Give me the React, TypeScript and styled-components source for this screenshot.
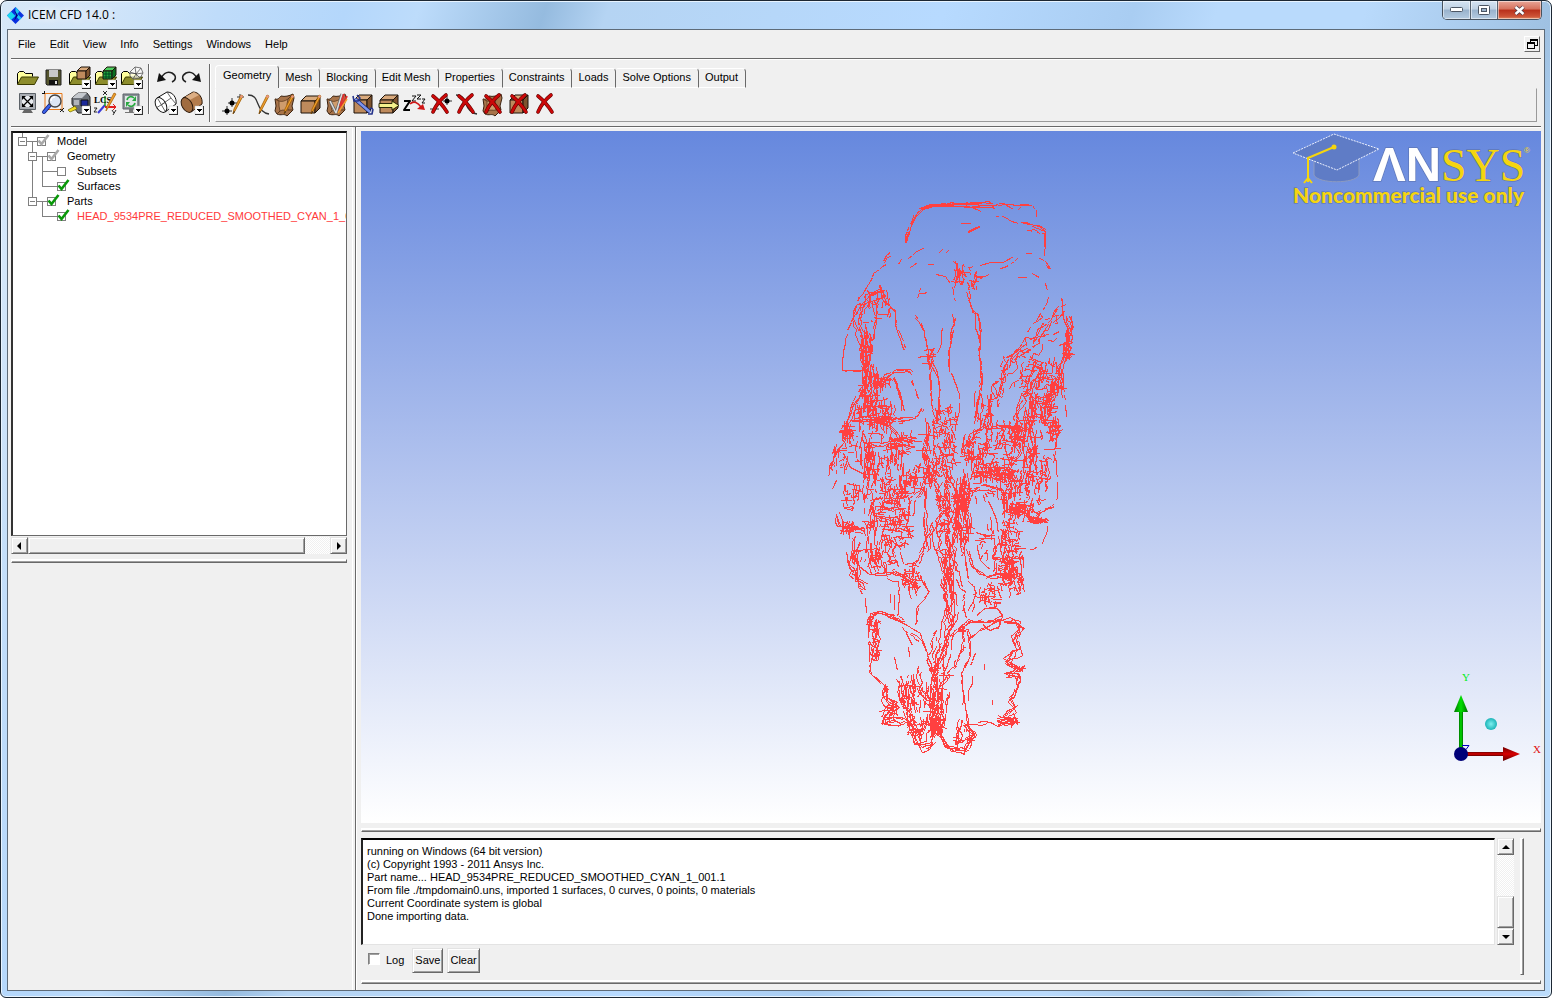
import React from "react";
import styled, { createGlobalStyle, css } from "styled-components";

const UI_FONT = `"Liberation Sans", Arial, sans-serif`;
const FACE = "#f0f0f0";

const GlobalStyle = createGlobalStyle`
  *, *::before, *::after { box-sizing: border-box; }
  body { margin: 0; background: #ffffff; font: 11px/13px ${UI_FONT}; color: #000; }
  button { font: inherit; color: inherit; }
  ul { list-style: none; margin: 0; padding: 0; }
`;

/* ---------- window frame ---------- */

const Frame = styled.div`
  display: flex;
  flex-direction: column;
  width: 100%;
  height: 100vh;
  min-height: 640px;
  padding: 0 6px 6px;
  border: 1px solid #1c2733;
  border-radius: 7px 7px 6px 6px;
  box-shadow: inset 0 0 0 1px #e8f4ff;
  background:
    linear-gradient(108deg, #d7e8f8 0, #d3e6f9 90px, #bfdcfa 210px, #b4d7fb 330px, #bddcfb 400px, #95bbdf 520px, #b5d4f3 580px, #b7daff 900px, #a9cdf2 1080px, #b9dafc 1160px, #b9dafc 1300px, #9fc1e2 1480px, #bbdcfc 1560px);
`;

const TitleBar = styled.header`
  display: flex;
  align-items: center;
  justify-content: space-between;
  height: 28px;
  flex: none;
`;

const AppTitle = styled.h1`
  display: flex;
  align-items: center;
  gap: 4px;
  margin: 0;
  font: 12px/18px "Open Sans", "Noto Sans", sans-serif;
  text-shadow: 0 0 8px #fff, 0 0 8px #fff;
`;

const WindowControls = styled.div`
  display: flex;
  align-self: flex-start;
  margin-right: 3px;
  height: 19px;
  border: 1px solid #47525e;
  border-top: 0;
  border-radius: 0 0 5px 5px;
  overflow: hidden;
`;

const ControlButton = styled.button<{ $close?: boolean }>`
  display: grid;
  place-items: center;
  width: ${(p) => (p.$close ? 44 : 27)}px;
  padding: 0;
  border: 0;
  box-shadow: inset 0 0 0 1px rgba(255, 255, 255, 0.5);
  background: ${(p) =>
    p.$close
      ? "linear-gradient(#e8a698, #d6705c 45%, #b8301a 50%, #cc5236 85%, #e08a60)"
      : "linear-gradient(#d5e4f3, #bfd1e3 45%, #98b2cc 50%, #b4cbe1)"};
  & + & { border-left: 1px solid #56626f; }
`;

const Client = styled.div`
  display: flex;
  flex-direction: column;
  flex: 1;
  min-height: 0;
  border: 1px solid #5e6b78;
  background: ${FACE};
  padding: 0 3px;
`;

/* ---------- menu and tool bars ---------- */

const MenuBar = styled.nav`
  display: flex;
  align-items: center;
  height: 29px;
  padding: 0 1px 0 0;
  border-bottom: 1px solid #696969;
  box-shadow: 0 1px 0 #fff;
  flex: none;
`;

const MenuButton = styled.button`
  border: 0;
  background: none;
  padding: 0 7px;
  line-height: 26px;
`;

const RestoreButton = styled.button`
  display: grid;
  place-items: center;
  width: 16px;
  height: 16px;
  margin-left: auto;
  padding: 0;
  background: ${FACE};
  border: 1px solid;
  border-color: #fff #696969 #696969 #fff;
`;

const ToolBar = styled.div`
  display: flex;
  align-items: flex-start;
  height: 68px;
  padding: 5px 4px 0 2px;
  border-bottom: 1px solid #696969;
  box-shadow: 0 1px 0 #fff;
  flex: none;
`;

const IconGrid = styled.div<{ $cols: number }>`
  display: grid;
  grid-template-columns: repeat(${(p) => p.$cols}, 26px);
  grid-auto-rows: 26px;
  margin: 0 4px 0 1px;
`;

const Divider = styled.span<{ $tall?: boolean }>`
  width: 2px;
  height: ${(p) => (p.$tall ? 58 : 50)}px;
  margin-right: ${(p) => (p.$tall ? 4 : 2)}px;
  border-left: 1px solid #696969;
  border-right: 1px solid #fff;
`;

const ToolButton = styled.button`
  display: block;
  width: 26px;
  height: 26px;
  padding: 0;
  border: 0;
  background: none;
  svg { display: block; }
`;

const TabArea = styled.div`
  flex: 1;
  min-width: 0;
  margin: 1px 0 0;
`;

const TabList = styled.div`
  display: flex;
  align-items: flex-end;
  height: 23px;
`;

const Tab = styled.button<{ $active?: boolean }>`
  height: 20px;
  padding: 0 7px 2px 6px;
  border: 0;
  border-top: 1px solid #fff;
  border-right: 1px solid #696969;
  border-bottom: 1px solid #fff;
  border-radius: 2px 4px 0 0;
  background: ${FACE};
  white-space: nowrap;
  ${(p) =>
    p.$active &&
    css`
      height: 23px;
      padding: 0 7px 4px;
      border-left: 1px solid #fff;
      border-bottom: 0;
      border-radius: 4px 4px 0 0;
    `}
`;

const TabPanel = styled.div`
  display: flex;
  height: 34px;
  padding: 2px 4px 0;
  border: 1px solid;
  border-color: ${FACE} #9a9a9a #9a9a9a #fff;
`;

/* ---------- work area ---------- */

const WorkArea = styled.main`
  display: flex;
  flex: 1;
  min-height: 0;
`;

const SidePane = styled.aside`
  width: 345px;
  flex: none;
  padding: 4px 8px 0 0;
  border-right: 1px solid #696969;
  box-shadow: inset -2px 0 0 ${FACE}, inset -3px 0 0 #fff;
`;

const TreeBox = styled.div`
  height: 405px;
  padding-top: 1px;
  overflow: hidden;
  background: #fff;
  border: 2px solid;
  border-color: #111 #696969 #696969 #333;
  border-width: 2px 1px 1px 2px;
`;

const Branch = styled.ul<{ $root?: boolean }>`
  padding-left: ${(p) => (p.$root ? 5 : 10)}px;
`;

const Node = styled.li`
  position: relative;
  &::before {
    content: "";
    position: absolute;
    left: 4px;
    top: -7px;
    height: 15px;
    border-left: 1px solid #808080;
  }
  &:not(:last-child)::before { height: 100%; }
`;

const NodeRow = styled.div`
  display: flex;
  align-items: center;
  height: 15px;
`;

const Expander = styled.button`
  position: relative;
  flex: none;
  width: 9px;
  height: 9px;
  padding: 0;
  border: 1px solid #808080;
  background: linear-gradient(#808080, #808080) center / 5px 1px no-repeat #fff;
`;

const Twig = styled.span<{ $leaf: boolean }>`
  flex: none;
  width: ${(p) => (p.$leaf ? 15 : 10)}px;
  margin-left: ${(p) => (p.$leaf ? 4 : 0)}px;
  height: 1px;
  background: #808080;
`;

const TreeLabel = styled.label<{ $red?: boolean }>`
  display: flex;
  align-items: center;
  gap: 11px;
  white-space: nowrap;
  color: ${(p) => (p.$red ? "#ff3a3a" : "#000")};
`;

const CheckWrap = styled.span`
  position: relative;
  display: block;
  flex: none;
  width: 9px;
  height: 9px;
  svg { position: absolute; left: 0; top: -3px; pointer-events: none; }
`;

const TreeCheck = styled.input`
  appearance: none;
  display: block;
  width: 9px;
  height: 9px;
  margin: 0;
  border: 1px solid #808080;
  background: #fff;
`;

const raised = css`
  background: ${FACE};
  border: 1px solid;
  border-color: #e3e3e3 #696969 #696969 #e3e3e3;
  box-shadow: inset 1px 1px 0 #fff, inset -1px -1px 0 #a0a0a0;
`;

const ScrollTrack = styled.div<{ $vertical?: boolean }>`
  display: flex;
  flex-direction: ${(p) => (p.$vertical ? "column" : "row")};
  ${(p) => (p.$vertical ? "width: 17px;" : "height: 17px; margin-top: 1px;")}
  background: repeating-conic-gradient(#fff 0 25%, ${FACE} 0 50%) 0 0 / 2px 2px;
`;

const ScrollButton = styled.button`
  display: grid;
  place-items: center;
  width: 17px;
  height: 17px;
  padding: 0;
  flex: none;
  ${raised}
`;

const Thumb = styled.div<{ $size: number }>`
  flex: 0 0 ${(p) => p.$size}px;
  ${raised}
`;

const Space = styled.div`
  flex: 1;
`;

const Sash = styled.div`
  height: 4px;
  flex: none;
  border: 1px solid;
  border-color: #fff #696969 #696969 #fff;
  box-shadow: inset 0 -1px 0 #a0a0a0;
  background: #fff;
`;

const SideSash = styled(Sash)`
  margin-top: 5px;
`;

const MainPane = styled.section`
  display: flex;
  flex-direction: column;
  flex: 1;
  min-width: 0;
  padding: 4px 0 6px 4px;
  border-left: 1px solid #fff;
`;

const Viewport = styled.div`
  position: relative;
  display: flex;
  justify-content: center;
  flex: 1;
  min-height: 0;
  margin-bottom: 5px;
  overflow: hidden;
  background: linear-gradient(#6688de, #ffffff);
`;

const MeshDrawing = styled.svg`
  display: block;
  flex: none;
  margin: 59px 0 0 8px;
`;

const Logo = styled.svg`
  position: absolute;
  top: 0;
  right: 8px;
`;

const Triad = styled.svg`
  position: absolute;
  right: 0;
  bottom: 53px;
`;

const Console = styled.div`
  display: flex;
  margin-top: 6px;
  padding-right: 17px;
  flex: none;
`;

const ConsoleMain = styled.div`
  flex: 1;
  min-width: 0;
`;

const ConsoleRow = styled.div`
  display: flex;
  gap: 2px;
`;

const Log = styled.textarea`
  display: block;
  flex: 1;
  min-width: 0;
  height: 107px;
  margin: 0;
  padding: 5px 4px;
  resize: none;
  overflow: hidden;
  outline: 0;
  border: 1px solid;
  border-color: #000 #e3e3e3 #e3e3e3 #222;
  border-width: 2px 1px 1px 2px;
  background: #fff;
  color: #000;
  font: 11px/13px ${UI_FONT};
`;

const ConsoleActions = styled.div`
  display: flex;
  align-items: flex-start;
  gap: 4px;
  padding: 3px 0 2px 7px;
`;

const LogOption = styled.label`
  display: flex;
  align-items: center;
  gap: 6px;
  height: 24px;
  padding-right: 4px;
`;

const LogCheck = styled.input`
  appearance: none;
  width: 12px;
  height: 12px;
  margin: 0 0 2px;
  border: 1px solid;
  border-color: #808080 #fff #fff #808080;
  box-shadow: inset 1px 1px 0 #a0a0a0;
  background: #fff;
`;

const PushButton = styled.button`
  height: 25px;
  padding: 0 2px;
  min-width: 31px;
  ${raised}
`;

const EndSash = styled.div`
  width: 4px;
  margin: 0 0 0 6px;
  border: 1px solid;
  border-color: #fff #696969 #696969 #fff;
  box-shadow: inset -1px 0 0 #a0a0a0;
  background: #fff;
`;

const BottomSash = styled(Sash)`
  margin-top: 5px;
`;

/* ---------- icons ---------- */

const Icon = ({ children }: { children: React.ReactNode }) => (
  <svg width="26" height="26" viewBox="0 0 26 26" fill="none" strokeLinejoin="round" aria-hidden="true">
    {children}
  </svg>
);

const DropBadge = () => (
  <g shapeRendering="crispEdges">
    <path d="M16 16h8v8h-8z" fill="#fff" stroke="#b8b8b8" strokeWidth=".5" />
    <path d="M24.500 16v8.500h-8.500" stroke="#333" />
    <path d="M17.500 19h6l-3 3z" fill="#000" />
  </g>
);

const Folder = () => (
  <>
    <path d="M3.500 20V9.500l2-2h4l2 2h7v3" fill="#ffff9c" stroke="#000" />
    <path d="M3.500 20.500l4-7.500h17l-4 7.500z" fill="#8d8d2c" stroke="#3c3c00" />
  </>
);

const Cube = ({ x = 3, y = 5, w = 19, h = 17, mesh }: { x?: number; y?: number; w?: number; h?: number; mesh?: boolean }) => {
  const d = Math.round(w * 0.28);
  const top = mesh ? "#4fd060" : "#d9aa7d";
  const front = mesh ? "#22a83c" : "#be8a5c";
  const side = mesh ? "#0b6e22" : "#7e532e";
  return (
    <>
      <g stroke="#1c120a">
        <path d={`M${x} ${y + d}l${d} ${-d}h${w - d}l${-d} ${d}z`} fill={top} />
        <path d={`M${x} ${y + d}h${w - d}v${h - d}h${d - w}z`} fill={front} />
        <path d={`M${x + w - d} ${y + d}l${d} ${-d}v${h - d}l${-d} ${d}z`} fill={side} />
      </g>
      {mesh && <path d={`M${x + 3} ${y + d}v${h - d}M${x + 6} ${y + d}v${h - d}M${x} ${y + d + 3}h${w - d}M${x} ${y + d + 6}h${w - d}`} stroke="#042" />}
    </>
  );
};

const Surface = () => (
  <>
    <path d="M3 8c3 1 4-1 6-3 4 1 8 0 12-2l1 4-2 8 1 4-6 6c-3-3-6 0-10-2l-2-3 1-5z" fill="#a8744a" stroke="#3a2210" />
    <path d="M7 10c3 1 6 0 9-2l-1 5 1 6c-3 1-5-1-8 1l-1-5z" fill="#cf9c6c" stroke="#5e3b1f" strokeWidth=".8" />
    <path d="M3 8l4 2M16 8l5-5M16 19l5 0M8 20l-3 3" stroke="#5e3b1f" />
  </>
);

const Pencil = ({ x = 0 }: { x?: number }) => (
  <g transform={`translate(${x} 0)`}>
    <path d="M20 4l2 1-8 15-2 3 1-5z" fill="#f0a030" stroke="#a05c00" strokeWidth=".8" />
    <path d="M20 4l2 1-1 2-2-1z" fill="#e8988c" />
    <path d="M13 20l-1 3 2-2z" fill="#222" />
  </g>
);

const RedCross = ({ x = 0 }: { x?: number }) => (
  <g transform={`translate(${x} 0)`}>
    <path d="M5 5c5 4 9 8 14 16M18 4C13 8 8 14 5 21" stroke="#600" strokeWidth="3.600" strokeLinecap="round" />
    <path d="M5 5c5 4 9 8 14 16M18 4C13 8 8 14 5 21" stroke="#cc0808" strokeWidth="2.400" strokeLinecap="round" />
  </g>
);

const Points = () => (
  <>
    <path d="M2 20h10M7 15v9M8 12h9M12 7v9M17 6h7M20 3v6" stroke="#333" />
    <circle cx="7" cy="20" r="2.500" fill="#000" />
    <circle cx="12" cy="12" r="2.500" fill="#000" />
  </>
);

const Curve = () => <path d="M2 4c6 0 8 3 10 9s5 9 11 10" stroke="#333" strokeWidth="1.300" />;

const Monitor = () => (
  <>
    <path d="M5 4h16v15H5z" fill="#8b9197" stroke="#5c636a" />
    <path d="M7 6h12v11H7z" fill="#e2e6e8" />
    <path d="M11 19h4v3h4v1H7v-1h4z" fill="#777" />
  </>
);

const Undo = ({ flip }: { flip?: boolean }) => (
  <g transform={flip ? "translate(26 0) scale(-1 1)" : undefined}>
    <path d="M8 14c3-5 7-7 11-5 5 3 4 7 0 9" stroke="#222" strokeWidth="1.500" />
    <path d="M4 18l2-9 7 7z" fill="#111" />
  </g>
);

type Tool = { name: string; art: React.ReactNode };

const fileTools: Tool[] = [
  { name: "Open project", art: <Folder /> },
  {
    name: "Save project",
    art: (
      <>
        <path d="M6 6h15v15H7l-1-1z" fill="#56562e" stroke="#222" />
        <path d="M9 6h9v7H9z" fill="#c8c8c8" />
        <path d="M9 16h9v5H9z" fill="#111" />
        <path d="M15 17h2v3h-2z" fill="#ddd" />
      </>
    ),
  },
  { name: "Open geometry", art: (<><Folder /><Cube x={11} y={3} w={13} h={12} /><DropBadge /></>) },
  { name: "Open mesh", art: (<><Folder /><Cube x={11} y={3} w={13} h={12} mesh /><DropBadge /></>) },
  {
    name: "Open blocking",
    art: (
      <>
        <Folder />
        <path d="M12 8l5-5 6 1 2 5-3 5-7 1-3-3zM12 8l6 2 7-1M17 3l1 7 4 4M23 4l-5 6-3 5" fill="#fff" fillOpacity=".6" stroke="#555" strokeWidth=".8" />
        <DropBadge />
      </>
    ),
  },
  {
    name: "Fit window",
    art: (
      <>
        <path d="M5.500 3.500h16v16h-16z" fill="#a9adb3" stroke="#5c6268" />
        <path d="M8 6h11v11H8z" fill="#e8ebef" />
        <path d="M9 7l9 9M18 7l-9 9" stroke="#000" strokeWidth="1.200" />
        <path d="M8 6h4l-4 4zM19 6v4l-4-4zM8 17v-4l4 4zM19 17h-4l4-4z" fill="#000" />
        <path d="M10 20h7l2 3H8z" fill="#666" />
      </>
    ),
  },
  {
    name: "Box zoom",
    art: (
      <>
        <path d="M5 3.500h17v16H5z" stroke="#e87818" />
        <path d="M10 15l-6 7" stroke="#101c78" strokeWidth="4" strokeLinecap="round" />
        <path d="M10 15l-6 7" stroke="#3c62e8" strokeWidth="2.400" strokeLinecap="round" />
        <circle cx="15" cy="11" r="6" fill="#dce6f4" stroke="#444" strokeWidth="1.400" />
        <path d="M11 11c0-3 2-4 4-4" stroke="#fff" strokeWidth="1.500" />
        <path d="M2 3.500h2M4.500 1v3M20 19l4 3M24 18l-4 4" stroke="#111" />
      </>
    ),
  },
  {
    name: "Measure distance",
    art: (
      <>
        <path d="M6 14V8l6-5h9l3 4v13l-4 3h-8l-3-4z" fill="#6c7178" stroke="#222" />
        <path d="M6 8l6-5h9l-5 5z" fill="#c4c8cd" />
        <path d="M8 10h5v5H8z" fill="#b0b4ba" />
        <path d="M15 10h7v6h-7z" fill="#1c2a9a" stroke="#111" />
        <path d="M2 20l7-4 2 3-7 3z" fill="#f4e020" stroke="#665c00" strokeWidth=".7" />
        <DropBadge />
      </>
    ),
  },
  {
    name: "Local coordinate system",
    art: (
      <>
        <path d="M13 15l-7 8" stroke="#3a3ad8" strokeWidth="2" />
        <path d="M13 17h10" stroke="#e02020" strokeWidth="2" />
        <path d="M13 16V6" stroke="#20a020" strokeWidth="1.500" />
        <path d="M21 14l3 3-3 3" stroke="#e02020" />
        <text x="2" y="13" fontFamily="Liberation Serif, serif" fontWeight="700" fontSize="9" fill="#000">LCS</text>
        <path d="M11 1l4 4M15 1l-4 4M20 20l2 3M24 20l-3 5M2 18h3l-3 4h3" stroke="#111" strokeWidth=".9" />
        <path d="M22 3l2 1-8 14-2 3 1-5z" fill="#f0a030" stroke="#a05c00" strokeWidth=".7" />
      </>
    ),
  },
  {
    name: "Refresh",
    art: (
      <>
        <Monitor />
        <path d="M9 10c1-4 5-4 7-2M17 13c-1 4-5 4-7 2" stroke="#28a840" strokeWidth="1.600" />
        <path d="M18 6v5h-4zM8 17v-5h4z" fill="#28a840" />
        <DropBadge />
      </>
    ),
  },
];

const viewTools: Tool[] = [
  { name: "Undo", art: <Undo /> },
  { name: "Redo", art: <Undo flip /> },
  {
    name: "Wire frame display",
    art: (
      <>
        <path d="M4 8l10-6c6 0 10 6 9 12l-11 8z" fill="#fff" stroke="#111" />
        <ellipse cx="8" cy="15" rx="5" ry="8" transform="rotate(-30 8 15)" fill="#fff" stroke="#111" />
        <path d="M8 15l10-7M5 9l7 12M3 18l10-6M14 2l4 6 5 6" stroke="#555" strokeWidth=".9" />
        <DropBadge />
      </>
    ),
  },
  {
    name: "Solid display",
    art: (
      <>
        <path d="M4 8l10-6c6 0 10 6 9 12l-11 8z" fill="#b47c4c" stroke="#2c1a0c" />
        <path d="M6 7l9-5 5 3-11 6z" fill="#dcae84" />
        <ellipse cx="8" cy="15" rx="5" ry="8" transform="rotate(-30 8 15)" fill="#a06c40" stroke="#2c1a0c" />
        <DropBadge />
      </>
    ),
  },
];

const geometryTools: Tool[] = [
  { name: "Create point", art: (<><Points /><Pencil x={1} /></>) },
  { name: "Create curve", art: (<><Curve /><Pencil x={1} /></>) },
  { name: "Create surface", art: (<><Surface /><Pencil /></>) },
  { name: "Create body", art: (<><Cube /><Pencil x={1} /></>) },
  {
    name: "Create faceted geometry",
    art: (
      <>
        <Surface />
        <path d="M6 10l6 12M18 3l-6 19" stroke="#666" strokeWidth="3" />
        <path d="M6 10l6 12M18 3l-6 19" stroke="#ddd" strokeWidth="1.500" />
        <path d="M20 3l-4 12M23 5l-8 15" stroke="#e03030" strokeWidth="2" />
        <path d="M23 8l-9 14" stroke="#f0a030" strokeWidth="1.500" />
      </>
    ),
  },
  {
    name: "Repair geometry",
    art: (
      <>
        <Cube x={4} y={4} w={18} h={18} />
        <path d="M5 8l15 13" stroke="#1a2468" strokeWidth="4" />
        <path d="M5 8l15 13" stroke="#7c94ec" strokeWidth="2.400" />
        <path d="M3 5l1 5h4l2-3-3-3M23 18l-1 5h-4M20 17l3 1" stroke="#26348c" strokeWidth="1.600" />
      </>
    ),
  },
  {
    name: "Transform geometry",
    art: (
      <>
        <Cube x={4} y={4} w={18} h={18} />
        <path d="M3 12.500h13v-2.500l7 4.500-7 4.500v-2.500H3z" fill="#f5f08c" stroke="#2c2a08" />
      </>
    ),
  },
  {
    name: "Restore dormant entities",
    art: (
      <>
        <path d="M2 10h6l-6 9h6" stroke="#000" strokeWidth="2" />
        <path d="M10 5h4l-4 5h4M15 4h4l-4 4h4M20 8h3l-3 4h3" stroke="#111" />
        <path d="M8 13c4-4 8-1 11 3" stroke="#d01818" strokeWidth="1.600" />
        <path d="M23 19l-8-1 6-5z" fill="#d01818" />
      </>
    ),
  },
  { name: "Delete point", art: (<><path d="M2 18h9M15 10h9M19 5v9" stroke="#333" /><circle cx="19" cy="10" r="2.500" fill="#000" /><RedCross /></>) },
  { name: "Delete curve", art: (<><Curve /><RedCross /></>) },
  { name: "Delete surface", art: (<><Surface /><RedCross x={1} /></>) },
  { name: "Delete body", art: (<><Cube x={4} y={4} w={18} h={18} /><RedCross x={1} /></>) },
  { name: "Delete any entity", art: <RedCross x={1} /> },
];

const Tools = ({ items }: { items: Tool[] }) => (
  <>
    {items.map((t) => (
      <ToolButton key={t.name} type="button" aria-label={t.name}>
        <Icon>{t.art}</Icon>
      </ToolButton>
    ))}
  </>
);

const Arrow = ({ dir }: { dir: "up" | "down" | "left" | "right" }) => {
  const d = { up: "M0 6h8L4 2z", down: "M0 2h8L4 6z", left: "M5 0v8L1 4z", right: "M2 0v8l4-4z" }[dir];
  return (
    <svg width="8" height="8" aria-hidden="true">
      <path d={d} />
    </svg>
  );
};

/* ---------- model tree ---------- */

type TreeNode = { label: string; state: "on" | "off" | "mixed"; red?: boolean; children?: TreeNode[] };

const model: TreeNode = {
  label: "Model",
  state: "mixed",
  children: [
    {
      label: "Geometry",
      state: "mixed",
      children: [
        { label: "Subsets", state: "off" },
        { label: "Surfaces", state: "on" },
      ],
    },
    {
      label: "Parts",
      state: "on",
      children: [{ label: "HEAD_9534PRE_REDUCED_SMOOTHED_CYAN_1_001.1", state: "on", red: true }],
    },
  ],
};

const TreeItem = ({ node }: { node: TreeNode }) => (
  <Node>
    <NodeRow>
      {node.children && <Expander type="button" aria-label={`Collapse ${node.label}`} />}
      <Twig $leaf={!node.children} />
      <TreeLabel $red={node.red}>
        <CheckWrap>
          <TreeCheck type="checkbox" defaultChecked={node.state !== "off"} />
          {node.state !== "off" && (
            <svg width="13" height="12" viewBox="0 0 13 12" fill="none" aria-hidden="true">
              <path d="M1.500 6.500L4.500 10L11.500 1" stroke={node.state === "on" ? "#089808" : "#a8a8a8"} strokeWidth="2.600" />
            </svg>
          )}
        </CheckWrap>
        {node.label}
      </TreeLabel>
    </NodeRow>
    {node.children && (
      <Branch>
        {node.children.map((c) => (
          <TreeItem key={c.label} node={c} />
        ))}
      </Branch>
    )}
  </Node>
);

/* ---------- surface mesh ----------
   Feature lines and dense patches, on a grid of three units per pixel. */

type Strand = [copies: number, spread: number, gap: number, ...pts: number[]];

const strands: Strand[] = [
  [3, 10, 0.12, 256, 155, 264, 120, 285, 75, 300, 55, 330, 45, 400, 41, 440, 42],
  [2, 6, 0.08, 300, 50, 400, 40, 515, 36],
  [3, 8, 0.08, 310, 48, 400, 44, 525, 49],
  [2, 8, 0.2, 525, 40, 570, 42, 640, 46, 648, 75],
  [1, 3, 0.1, 525, 76, 555, 78, 575, 92, 605, 98],
  [1, 3, 0.1, 560, 45, 590, 60, 600, 50],
  [3, 12, 0.2, 600, 98, 640, 105, 673, 118, 674, 145],
  [2, 10, 0.2, 615, 115, 670, 125, 668, 190],
  [1, 0, 0, 420, 98, 450, 100],
  [2, 3, 0, 445, 124, 480, 108],
  [1, 0, 0, 455, 50, 482, 62],
  [1, 2, 0, 265, 203, 285, 185, 312, 170],
  [1, 0, 0, 270, 232, 290, 215],
  [1, 0, 0, 355, 190, 365, 178],
  [1, 0, 0, 375, 190, 383, 180],
  [1, 0, 0, 320, 223, 340, 221],
  [1, 0, 0, 235, 222, 242, 207],
  [3, 8, 0, 188, 216, 195, 200, 208, 190],
  [1, 4, 0.2, 195, 225, 160, 250, 140, 290, 110, 330, 100, 370, 80, 420, 70, 480, 66, 540],
  [2, 6, 0.1, 70, 540, 130, 541],
  [5, 26, 0.25, 185, 305, 140, 325, 112, 370, 108, 420, 130, 470, 135, 560],
  [2, 8, 0.2, 180, 285, 190, 325, 225, 365, 230, 410, 252, 475],
  [2, 16, 0.2, 160, 320, 170, 370, 155, 420, 150, 480],
  [1, 4, 0.05, 350, 253, 375, 260, 395, 290, 403, 335],
  [2, 10, 0.25, 400, 210, 410, 250, 395, 300],
  [1, 0, 0, 480, 225, 510, 217, 550, 216, 578, 198],
  [1, 0, 0.1, 540, 235, 565, 226, 592, 205],
  [3, 14, 0.15, 440, 300, 450, 345, 468, 370, 475, 420, 470, 500, 482, 560, 465, 640, 470, 690],
  [1, 5, 0.15, 466, 240, 470, 300],
  [1, 3, 0, 300, 295, 298, 308, 290, 325],
  [1, 0, 0, 298, 308, 320, 307],
  [2, 10, 0.15, 290, 380, 305, 400, 315, 460, 325, 520, 335, 600, 345, 700],
  [2, 8, 0.2, 325, 500, 345, 540, 360, 600, 350, 700],
  [3, 12, 0.25, 400, 370, 390, 430, 380, 500, 382, 540],
  [1, 3, 0.05, 388, 540, 400, 560, 417, 610, 415, 660, 405, 720],
  [1, 0, 0.1, 365, 415, 362, 460, 352, 490],
  [1, 0, 0, 590, 262, 618, 262],
  [1, 2, 0, 635, 250, 655, 262],
  [1, 0, 0, 615, 190, 632, 190],
  [2, 6, 0.2, 660, 205, 675, 212, 688, 235],
  [1, 3, 0.1, 675, 280, 686, 310, 683, 335, 660, 370, 645, 400],
  [2, 6, 0.1, 725, 325, 728, 380, 743, 420, 745, 500],
  [5, 20, 0.2, 748, 380, 750, 430, 735, 500, 705, 580, 685, 660],
  [1, 4, 0.35, 728, 480, 730, 580, 740, 680],
  [6, 42, 0.32, 718, 360, 660, 420, 600, 480, 550, 520, 530, 570, 512, 650],
  [2, 10, 0.1, 512, 610, 512, 720],
  [3, 34, 0.35, 700, 420, 650, 470, 600, 520, 560, 580],
  [3, 14, 0.12, 185, 580, 200, 555, 220, 541, 262, 540, 272, 552],
  [3, 12, 0.12, 220, 560, 235, 610, 245, 660],
  [2, 12, 0.3, 275, 570, 290, 620],
  [3, 16, 0.15, 130, 590, 100, 640, 85, 700, 80, 740, 50, 780, 30, 830],
  [3, 16, 0.15, 100, 685, 200, 688, 290, 683, 310, 655],
  [1, 0, 0.2, 70, 790, 90, 830, 125, 850, 155, 852],
  [3, 14, 0.1, 180, 700, 220, 720, 245, 765],
  [3, 14, 0.1, 140, 760, 190, 765, 240, 755, 280, 765],
  [3, 14, 0.1, 520, 710, 580, 712, 605, 750],
  [3, 14, 0.1, 440, 770, 460, 730, 500, 710, 490, 800],
  [4, 26, 0.2, 580, 710, 600, 650, 630, 590, 660, 530, 620, 510],
  [2, 8, 0.2, 550, 770, 570, 830, 600, 790, 580, 750],
  [1, 0, 0.2, 620, 778, 720, 775],
  [1, 4, 0.3, 705, 780, 710, 860, 708, 930],
  [1, 4, 0.5, 50, 800, 48, 870, 38, 895],
  [1, 4, 0.3, 40, 780, 28, 830, 25, 860],
  [4, 16, 0.1, 48, 975, 60, 1000, 90, 1015, 130, 1020],
  [2, 6, 0.3, 75, 880, 75, 930],
  [1, 4, 0.2, 80, 880, 115, 885, 110, 930, 90, 960],
  [2, 8, 0.1, 120, 1060, 105, 1100, 120, 1130, 150, 1155, 220, 1148],
  [5, 34, 0.2, 92, 1090, 100, 1150, 140, 1200],
  [1, 4, 0.2, 135, 1210, 140, 1265],
  [4, 16, 0.1, 220, 1145, 260, 1160, 290, 1190],
  [1, 3, 0.25, 235, 1170, 238, 1230, 232, 1280],
  [2, 10, 0.3, 300, 1150, 325, 1200, 290, 1250, 285, 1300],
  [3, 18, 0.12, 270, 1000, 275, 930, 320, 890, 318, 1080],
  [3, 20, 0.25, 345, 1000, 320, 1070, 290, 1130],
  [4, 22, 0.06, 142, 1305, 150, 1280, 170, 1275, 215, 1285, 245, 1300],
  [1, 3, 0.05, 215, 1285, 260, 1305, 300, 1330, 320, 1385],
  [2, 14, 0.2, 250, 1310, 300, 1360, 320, 1410, 345, 1480, 345, 1530],
  [5, 24, 0.05, 160, 1290, 155, 1340, 162, 1410],
  [2, 12, 0.08, 155, 1380, 150, 1445, 175, 1470, 200, 1490],
  [6, 24, 0.04, 205, 1490, 190, 1525, 225, 1545, 205, 1565, 194, 1588, 250, 1598],
  [5, 26, 0.12, 240, 1470, 255, 1540, 275, 1600, 292, 1675, 318, 1665, 350, 1610],
  [4, 24, 0.2, 290, 1440, 300, 1500, 330, 1560, 345, 1620],
  [4, 20, 0.08, 420, 1315, 450, 1285, 500, 1286, 545, 1280],
  [2, 7, 0.05, 470, 1275, 495, 1250, 530, 1250, 548, 1275, 535, 1310, 510, 1318, 490, 1300],
  [2, 12, 0.1, 450, 1340, 490, 1310, 550, 1285],
  [5, 22, 0.04, 550, 1288, 592, 1287, 603, 1312, 585, 1340],
  [5, 22, 0.04, 585, 1340, 596, 1385, 558, 1410, 603, 1433],
  [4, 20, 0.05, 605, 1433, 555, 1456, 586, 1460, 594, 1490, 564, 1530, 580, 1555, 552, 1580],
  [5, 18, 0.05, 540, 1585, 578, 1593, 540, 1598],
  [2, 14, 0.1, 550, 1600, 480, 1597, 440, 1605],
  [2, 8, 0.1, 390, 1340, 410, 1320, 445, 1322, 445, 1400, 420, 1450, 430, 1540, 445, 1605],
  [3, 18, 0.2, 430, 1320, 430, 1370, 400, 1430, 360, 1490, 350, 1600],
  [1, 3, 0.1, 400, 1320, 390, 1400, 370, 1450],
  [4, 18, 0.06, 350, 1620, 385, 1675, 440, 1682, 465, 1630, 430, 1600],
  [3, 14, 0.1, 420, 1590, 410, 1660, 450, 1640],
  [6, 30, 0.16, 385, 840, 395, 1000, 385, 1130, 385, 1250, 370, 1350, 345, 1450, 345, 1630],
  [2, 7, 0.08, 386, 1080, 390, 1250],
  [4, 34, 0.3, 350, 840, 365, 960, 350, 1060, 375, 1120, 380, 1200],
  [3, 22, 0.3, 345, 1320, 330, 1400, 340, 1480],
  [3, 14, 0.15, 400, 1200, 408, 1270, 380, 1350, 350, 1440],
  [4, 34, 0.2, 410, 1070, 425, 1150, 450, 1210, 440, 1270],
  [3, 14, 0.1, 445, 1080, 460, 1130, 500, 1160, 560, 1155],
  [1, 3, 0.15, 470, 1060, 480, 1110, 520, 1145, 527, 1060],
  [2, 8, 0.15, 450, 900, 490, 880, 545, 895, 550, 1000],
  [1, 3, 0.2, 490, 900, 530, 990, 545, 1100],
  [4, 16, 0.08, 570, 960, 610, 970, 630, 985, 680, 995],
  [3, 16, 0.15, 600, 955, 650, 975, 695, 950],
  [1, 3, 0.08, 683, 990, 678, 1030, 665, 1060, 640, 1075, 590, 1077],
  [3, 14, 0.2, 605, 1090, 600, 1150, 605, 1180, 590, 1210],
  [1, 0, 0, 200, 1165, 220, 1172, 235, 1172],
  [1, 0, 0, 210, 1210, 210, 1235],
  [1, 0, 0, 221, 1213, 221, 1258],
  [1, 0, 0.1, 218, 1388, 230, 1440],
  [1, 0, 0, 263, 1368, 268, 1398],
  [1, 0, 0, 258, 1330, 275, 1365],
  [1, 0, 0, 517, 1526, 517, 1543],
  [1, 0, 0, 493, 1420, 493, 1438],
  [1, 0, 0, 465, 1390, 450, 1425],
  [1, 0, 0, 457, 1455, 455, 1480, 443, 1500, 443, 1530],
];

type Patch = [cx: number, cy: number, rx: number, ry: number, n: number, kind: "v" | "h" | "m"];

const patches: Patch[] = [
  [440, 258, 44, 36, 34, "m"],
  [160, 350, 55, 50, 30, "m"],
  [138, 480, 16, 60, 45, "v"],
  [148, 590, 30, 70, 80, "v"],
  [185, 575, 20, 20, 22, "m"],
  [160, 665, 62, 40, 90, "m"],
  [78, 725, 16, 28, 36, "m"],
  [160, 770, 60, 90, 60, "v"],
  [250, 760, 36, 30, 32, "h"],
  [215, 850, 45, 90, 55, "v"],
  [60, 800, 32, 40, 18, "m"],
  [180, 690, 80, 14, 26, "h"],
  [325, 500, 16, 24, 12, "m"],
  [370, 690, 38, 40, 38, "m"],
  [370, 790, 36, 80, 70, "m"],
  [325, 780, 20, 90, 36, "v"],
  [742, 460, 14, 40, 32, "m"],
  [645, 580, 44, 60, 55, "m"],
  [700, 570, 30, 70, 40, "v"],
  [685, 635, 18, 36, 34, "m"],
  [703, 725, 14, 36, 40, "m"],
  [630, 750, 24, 130, 70, "v"],
  [655, 690, 40, 55, 34, "v"],
  [595, 740, 20, 35, 36, "m"],
  [550, 730, 60, 34, 40, "m"],
  [460, 780, 36, 50, 56, "m"],
  [530, 800, 60, 60, 56, "m"],
  [530, 850, 80, 22, 70, "m"],
  [490, 680, 26, 50, 20, "v"],
  [300, 860, 45, 36, 50, "m"],
  [655, 830, 50, 55, 34, "m"],
  [148, 900, 20, 130, 60, "v"],
  [215, 950, 55, 55, 66, "h"],
  [235, 885, 50, 50, 35, "m"],
  [225, 1030, 45, 50, 56, "m"],
  [160, 1040, 35, 90, 38, "v"],
  [190, 1115, 55, 36, 40, "m"],
  [85, 1010, 20, 16, 28, "m"],
  [95, 930, 30, 55, 16, "m"],
  [108, 1100, 18, 50, 16, "v"],
  [270, 1165, 26, 45, 44, "m"],
  [372, 960, 18, 60, 36, "m"],
  [428, 960, 24, 110, 95, "v"],
  [430, 920, 22, 45, 40, "m"],
  [490, 900, 55, 36, 20, "m"],
  [510, 850, 45, 22, 30, "m"],
  [500, 1060, 40, 70, 24, "m"],
  [575, 900, 28, 70, 76, "m"],
  [600, 960, 40, 24, 60, "m"],
  [655, 990, 22, 8, 26, "h"],
  [650, 890, 35, 55, 42, "m"],
  [570, 1060, 28, 80, 80, "m"],
  [555, 1135, 30, 34, 60, "m"],
  [575, 1170, 34, 34, 50, "m"],
  [510, 1215, 36, 36, 34, "m"],
  [380, 1120, 12, 130, 26, "v"],
  [295, 1540, 50, 70, 40, "v"],
  [268, 1500, 14, 60, 24, "v"],
  [300, 1610, 40, 26, 36, "m"],
  [210, 1570, 24, 30, 18, "m"],
  [350, 1605, 20, 30, 44, "m"],
  [375, 1500, 22, 80, 24, "v"],
  [430, 1640, 30, 30, 14, "m"],
  [578, 1592, 10, 8, 10, "m"],
  [162, 1310, 22, 20, 16, "m"],
  [168, 1380, 14, 40, 14, "h"],
];

const buildMesh = () => {
  let seed = 9534;
  const rnd = () => {
    seed = (seed * 1664525 + 1013904223) % 4294967296;
    return seed / 4294967296;
  };
  const px = (v: number) => Math.round(v / 3) + 0.5;
  const out: string[] = [];

  strands.forEach(([copies, spread, gap, ...pts]) => {
    for (let c = 0; c < copies; c++) {
      let ox = (rnd() - 0.5) * spread;
      let oy = (rnd() - 0.5) * spread;
      let pen = false;
      for (let i = 0; i + 3 < pts.length; i += 2) {
        const [x0, y0, x1, y1] = pts.slice(i, i + 4);
        const steps = Math.max(1, Math.round(Math.hypot(x1 - x0, y1 - y0) / 12));
        for (let s = i === 0 ? 0 : 1; s <= steps; s++) {
          const t = s / steps;
          const lim = spread / 2;
          ox = Math.max(-lim, Math.min(lim, ox + (rnd() - 0.5) * spread * 0.7));
          oy = Math.max(-lim, Math.min(lim, oy + (rnd() - 0.5) * spread * 0.7));
          if (rnd() < gap) pen = false;
          out.push(`${pen ? "L" : "M"}${px(x0 + (x1 - x0) * t + ox)} ${px(y0 + (y1 - y0) * t + oy)}`);
          pen = true;
        }
      }
    }
  });

  patches.forEach(([cx, cy, rx, ry, n, kind]) => {
    for (let i = 0; i < n; i++) {
      const a = rnd() * Math.PI * 2;
      const r = Math.sqrt(rnd());
      const flat = kind === "h" ? rnd() < 0.75 : kind === "v" ? rnd() < 0.1 : rnd() < 0.35;
      const parts = 1 + Math.floor(rnd() * 3);
      const reach = kind === "v" ? 20 : 11;
      const back = (parts * (5 + reach / 2)) / 2;
      let x = cx + Math.cos(a) * rx * r - (flat ? back : 0);
      let y = cy + Math.sin(a) * ry * r - (flat ? 0 : back);
      out.push(`M${px(x)} ${px(y)}`);
      for (let k = 0; k < parts; k++) {
        const len = 5 + rnd() * reach;
        const off = (rnd() - 0.5) * 9;
        x += flat ? len : off;
        y += flat ? off * 0.8 : len;
        out.push(`L${px(x)} ${px(y)}`);
      }
    }
  });
  return out.join("");
};

const meshPath = buildMesh();

/* ---------- page ---------- */

const tabs = ["Geometry", "Mesh", "Blocking", "Edit Mesh", "Properties", "Constraints", "Loads", "Solve Options", "Output"];
const menus = ["File", "Edit", "View", "Info", "Settings", "Windows", "Help"];

const messages = [
  "running on Windows (64 bit version)",
  "(c) Copyright 1993 - 2011 Ansys Inc.",
  "Part name... HEAD_9534PRE_REDUCED_SMOOTHED_CYAN_1_001.1",
  "From file ./tmpdomain0.uns, imported 1 surfaces, 0 curves, 0 points, 0 materials",
  "Current Coordinate system is global",
  "Done importing data.",
].join("\n");

const AnsysLogo = () => (
  <Logo width="242" height="82" viewBox="0 0 242 82" role="img" aria-label="ANSYS Noncommercial use only">
    <path d="M23 30v14c4 9 41 9 45 0V28" fill="#5f7cc6" stroke="#8c9ac0" />
    <path d="M2 22L43 3l45 15-42 21z" fill="#5f7cc6" />
    <path d="M2 22L43 3l45 15-42 21z" fill="none" stroke="#eef2ff" strokeDasharray="2 1" />
    <path d="M43 16L17 27v24M17 47l-4 5M17 47l4 5" fill="none" stroke="#f5d50f" strokeWidth="2" />
    <circle cx="43" cy="16" r="2.500" fill="#f5d50f" />
    <g paintOrder="stroke" stroke="#55699e" strokeOpacity=".6" strokeWidth="1.500">
      <text x="82" y="50" fontFamily="Liberation Sans, sans-serif" fontWeight="700" fontSize="49" fill="#fff">ΛN</text>
      <text x="150" y="50" fontFamily="Liberation Serif, serif" fontSize="46" fill="#f5d50f">SYS</text>
      <text x="233" y="22" fontFamily="Liberation Sans, sans-serif" fontSize="8" fill="#f5d50f" strokeWidth="0">®</text>
      <text x="2" y="72" fontFamily="Lato, sans-serif" fontWeight="900" fontSize="21" fill="#f5d50f">Noncommercial use only</text>
    </g>
  </Logo>
);

const AxisTriad = () => (
  <Triad width="92" height="105" viewBox="0 0 92 105" role="img" aria-label="Axis triad">
    <defs>
      <linearGradient id="yAxis"><stop offset="0" stopColor="#007400" /><stop offset=".5" stopColor="#00e000" /><stop offset="1" stopColor="#006c00" /></linearGradient>
      <linearGradient id="xAxis" x2="0" y2="1"><stop offset="0" stopColor="#700000" /><stop offset=".5" stopColor="#d80000" /><stop offset="1" stopColor="#600000" /></linearGradient>
      <radialGradient id="ball"><stop offset="0" stopColor="#7df0f0" /><stop offset="1" stopColor="#1cb4b8" /></radialGradient>
    </defs>
    <rect x="10" y="46" width="4" height="40" fill="url(#yAxis)" />
    <path d="M12 30l7 17H5z" fill="url(#yAxis)" />
    <rect x="14" y="87" width="42" height="4" fill="url(#xAxis)" />
    <path d="M71 89l-17 7V82z" fill="url(#xAxis)" />
    <circle cx="12" cy="89" r="7" fill="#000078" />
    <circle cx="42" cy="59" r="6" fill="url(#ball)" />
    <g fontFamily="Liberation Serif, serif" fontSize="11">
      <text x="13" y="16" fill="#00ee20">Y</text>
      <text x="84" y="88" fill="#e01010">X</text>
    </g>
    <path d="M13 80.500h7l-3 4" fill="none" stroke="#0000c0" />
  </Triad>
);

export default function App() {
  return (
    <>
      <GlobalStyle />
      <Frame>
        <TitleBar>
          <AppTitle>
            <svg width="17" height="17" viewBox="0 0 17 17" aria-hidden="true">
              <path d="M8.500 0l8.500 8.500-8.500 8.500L0 8.500z" fill="#0a30e0" />
              <path d="M4 4.500L8.500 9 4 13 0 8.500z" fill="#18d8f0" />
              <path d="M8.500 0v9l4-4.500zM8.500 9l4 4 2-2-4-4z" fill="#18c8f0" />
              <path d="M7 2.500L9 8l-2 6 4-5.500z" fill="#000080" />
            </svg>
            ICEM CFD 14.0 :
          </AppTitle>
          <WindowControls>
            <ControlButton type="button" aria-label="Minimize">
              <svg width="13" height="6"><rect x=".5" y=".5" width="12" height="4" rx="1" fill="#fff" stroke="#4c5664" /></svg>
            </ControlButton>
            <ControlButton type="button" aria-label="Maximize">
              <svg width="12" height="10"><rect x=".5" y=".5" width="11" height="9" rx="1" fill="#fff" stroke="#4c5664" /><rect x="3.500" y="3.500" width="5" height="3" fill="#9db4cb" stroke="#4c5664" /></svg>
            </ControlButton>
            <ControlButton type="button" aria-label="Close" $close>
              <svg width="13" height="11" viewBox="0 0 13 11"><path d="M2.500 2l8 7M10.500 2l-8 7" stroke="#4e3a48" strokeWidth="4" /><path d="M2.500 2l8 7M10.500 2l-8 7" stroke="#fff" strokeWidth="2.400" /></svg>
            </ControlButton>
          </WindowControls>
        </TitleBar>

        <Client>
          <MenuBar>
            {menus.map((m) => (
              <MenuButton key={m} type="button">{m}</MenuButton>
            ))}
            <RestoreButton type="button" aria-label="Restore view">
              <svg width="11" height="10" fill="none" stroke="#000" shapeRendering="crispEdges">
                <path d="M3.500 3.500v-3h7v6h-3M3.500 1.500h7M.5 3.500h7v6h-7zM.5 4.500h7" />
              </svg>
            </RestoreButton>
          </MenuBar>

          <ToolBar>
            <IconGrid $cols={5}><Tools items={fileTools} /></IconGrid>
            <Divider />
            <IconGrid $cols={2}><Tools items={viewTools} /></IconGrid>
            <Divider $tall />
            <TabArea>
              <TabList role="tablist">
                {tabs.map((t, i) => (
                  <Tab key={t} type="button" role="tab" aria-selected={i === 0} $active={i === 0}>{t}</Tab>
                ))}
              </TabList>
              <TabPanel role="tabpanel"><Tools items={geometryTools} /></TabPanel>
            </TabArea>
          </ToolBar>

          <WorkArea>
            <SidePane>
              <TreeBox>
                <Branch $root><TreeItem node={model} /></Branch>
              </TreeBox>
              <ScrollTrack>
                <ScrollButton type="button" aria-label="Scroll left"><Arrow dir="left" /></ScrollButton>
                <Thumb $size={277} />
                <Space />
                <ScrollButton type="button" aria-label="Scroll right"><Arrow dir="right" /></ScrollButton>
              </ScrollTrack>
              <SideSash />
            </SidePane>

            <MainPane>
              <Viewport>
                <MeshDrawing width="270" height="570" viewBox="0 0 270 570" role="img" aria-label="Surface mesh of a head">
                  <path d={meshPath} fill="none" stroke="#ff4040" strokeWidth="1" shapeRendering="crispEdges" />
                </MeshDrawing>
                <AnsysLogo />
                <AxisTriad />
              </Viewport>
              <Sash />
              <Console>
                <ConsoleMain>
                  <ConsoleRow>
                    <Log readOnly aria-label="Messages" value={messages} />
                    <ScrollTrack $vertical>
                      <ScrollButton type="button" aria-label="Scroll up"><Arrow dir="up" /></ScrollButton>
                      <Space />
                      <Thumb $size={32} />
                      <ScrollButton type="button" aria-label="Scroll down"><Arrow dir="down" /></ScrollButton>
                    </ScrollTrack>
                  </ConsoleRow>
                  <ConsoleActions>
                    <LogOption><LogCheck type="checkbox" />Log</LogOption>
                    <PushButton type="button">Save</PushButton>
                    <PushButton type="button">Clear</PushButton>
                  </ConsoleActions>
                </ConsoleMain>
                <EndSash />
              </Console>
              <BottomSash />
            </MainPane>
          </WorkArea>
        </Client>
      </Frame>
    </>
  );
}
